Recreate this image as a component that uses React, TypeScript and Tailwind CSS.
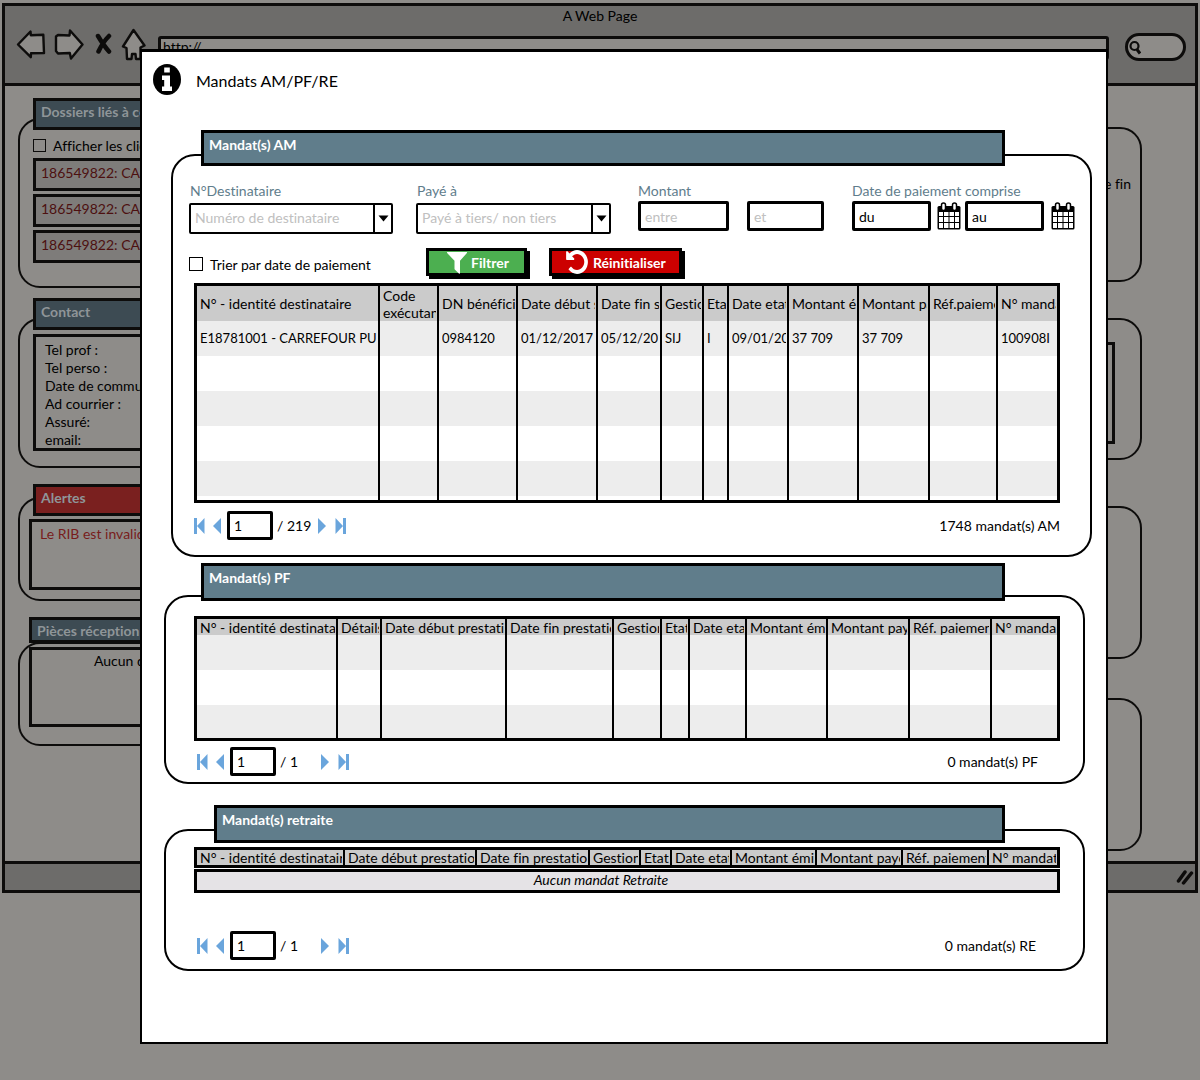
import type { ReactNode } from "react";

/* ---------- icons ---------- */

function BackIcon() {
  return (
    <svg className="h-[30px] w-[30px]" viewBox="0 0 30 30" fill="#8e8c89" stroke="#0d0c0b" strokeWidth="2.4" strokeLinejoin="round">
      <path d="M2 15.500L14.500 2.500 14.800 6.200 27.300 5.800 28 24 15 24.200 14.800 28.200Z" />
    </svg>
  );
}

function ForwardIcon() {
  return (
    <svg className="h-[32px] w-[30px]" viewBox="0 0 30 32" fill="#8e8c89" stroke="#0d0c0b" strokeWidth="2.400" strokeLinejoin="round">
      <path d="M2 8.500L4 7 15.500 7.500 16 2.500 28.500 16.500 17 30.500 15.800 25 4 25.500 2 23Z" />
    </svg>
  );
}

function StopIcon() {
  return (
    <svg className="h-[24px] w-[17px]" viewBox="0 0 17 24" fill="none" stroke="#0d0c0b" strokeWidth="4.500" strokeLinecap="round">
      <path d="M3 4C6 9 10 15 14 19.500M14 4C9 9 6 14 3.500 19.500" />
    </svg>
  );
}

function HomeIcon() {
  return (
    <svg className="h-[33px] w-[25px]" viewBox="0 0 25 33" fill="#8e8c89" stroke="#0d0c0b" strokeWidth="2.400" strokeLinejoin="round">
      <path d="M12.500 2L23.500 17.500 19.500 19.500 19.500 31 15 31 14.500 26 11 26 10.500 31 6 31 5.500 20 2 18.500Z" />
    </svg>
  );
}

function InfoIcon() {
  return (
    <svg className="h-[31px] w-[28px] shrink-0" viewBox="0 0 28 31" aria-hidden="true">
      <ellipse cx="14" cy="15.500" rx="14" ry="15.500" fill="#000" />
      <path fill="#fff" d="M11.200 3.500h5.600v5h-5.600zM9 11.500h8v11h2v4.500H9v-4.500h2.200v-6.500H9z" />
    </svg>
  );
}

function CalendarIcon() {
  return (
    <svg className="h-[28px] w-[24px]" viewBox="0 0 24 28" aria-hidden="true">
      <rect x="0.500" y="4" width="23" height="23.500" rx="1.500" fill="#000" />
      <path
        fill="#fff"
        d="M2 10h4v4H2zM7 10h4.500v4H7zM12.500 10h4.500v4h-4.500zM18 10h4v4h-4zM2 15h4v5H2zM7 15h4.500v5H7zM12.500 15h4.500v5h-4.500zM18 15h4v5h-4zM2 21h4v5H2zM7 21h4.500v5H7zM12.500 21h4.500v5h-4.500zM18 21h4v5h-4z"
      />
      <rect x="4.500" y="1" width="4" height="7.500" rx="2" fill="#fff" stroke="#000" strokeWidth="1.500" />
      <rect x="15.500" y="1" width="4" height="7.500" rx="2" fill="#fff" stroke="#000" strokeWidth="1.500" />
    </svg>
  );
}

function FunnelIcon() {
  return (
    <svg className="h-[23px] w-[20px]" viewBox="0 0 20 23" fill="#fff" aria-hidden="true">
      <path d="M0.500 1h19c.6 0 .8.600.400 1L13 9.800V22c0 .6-.6.900-1.100.500L8 18.800c-.4-.3-.500-.6-.5-1V9.800L.1 2C-.2 1.600 0 1 .5 1z" />
    </svg>
  );
}

function UndoIcon() {
  return (
    <svg className="h-[24px] w-[22px]" viewBox="120 120 1550 1550" preserveAspectRatio="none" fill="#fff" aria-hidden="true">
      <path d="M1664 896q0 156-61 298t-164 245-245 164-298 61q-172 0-327-72.500t-264-204.500q-7-10-6.500-22.500t8.500-20.500l137-138q10-9 25-9 16 2 23 12 73 95 179 147t225 52q104 0 198.500-40.500t163.500-109.500 109.500-163.500 40.500-198.500-40.500-198.500-109.500-163.500-163.500-109.500-198.500-40.500q-98 0-188 35.500t-160 101.500l137 138q31 30 14 69-17 40-59 40h-448q-26 0-45-19t-19-45v-448q0-42 40-59 39-17 69 14l130 129q107-101 244.500-156.500t284.500-55.500q156 0 298 61t245 164 164 245 61 298z" />
    </svg>
  );
}

/* ---------- page behind the dialog ---------- */

function SideBox({ title, tab, box, children }: { title: string; tab: string; box: string; children: ReactNode }) {
  return (
    <section>
      <h2 className={`relative border-[3px] border-[#0d0c0b] pt-px pl-[5px] text-[14px] leading-[20px] font-bold text-[#8f9598] ${tab}`}>{title}</h2>
      <div className={`rounded-[22px] border-2 border-[#0d0c0b] ${box}`}>{children}</div>
    </section>
  );
}

function BackgroundPage() {
  return (
    <div className="mx-[2px] border-[3px] border-[#0d0c0b]">
      <header className="h-[80px] border-b-[3px] border-[#0d0c0b] bg-[#6d6c6a]">
        <p className="text-center leading-[20px]">A Web Page</p>
        <div className="flex h-[36px] items-center pr-[9px] pl-[11px]">
          <button aria-label="Précédent"><BackIcon /></button>
          <button aria-label="Suivant" className="ml-[8px]"><ForwardIcon /></button>
          <button aria-label="Arrêter" className="ml-[11px]"><StopIcon /></button>
          <button aria-label="Accueil" className="ml-[9px]"><HomeIcon /></button>
          <input
            aria-label="Adresse"
            defaultValue="http://"
            className="mt-[8px] ml-[12px] h-[24px] min-w-0 flex-1 rounded-[3px] border-[3px] border-[#0d0c0b] bg-[#8e8c89] pb-[4px] pl-[2px]"
          />
          <div className="mt-[6px] ml-[16px] flex h-[28px] w-[61px] items-center rounded-[14px] border-[3px] border-[#0d0c0b] bg-[#8e8c89] pl-[1px]">
            <svg className="h-[15px] w-[12px] shrink-0" viewBox="0 0 12 15" fill="none" stroke="#0d0c0b" strokeWidth="2.200" aria-hidden="true">
              <circle cx="5.500" cy="6" r="4" />
              <path d="M8 9.500l3 4" strokeWidth="3" />
            </svg>
            <input aria-label="Recherche" className="w-full min-w-0" />
          </div>
        </div>
      </header>
      <main className="flex h-[775px] justify-between pr-[53px] pl-[13px]">
        <div className="w-[280px] pt-[12px]">
          <SideBox title="Dossiers liés à ce client" tab="ml-[15px] h-[32px] bg-[#3d4b53]" box="-mt-[12px] h-[170px] pt-[15px] pl-[13px]">
            <label className="flex h-[20px] items-center gap-[7px]">
              <input type="checkbox" className="size-[13px] appearance-none border border-[#0d0c0b]" />
              Afficher les clients
            </label>
            <div className="mt-[3px] flex flex-col gap-[3px]">
              {[0, 1, 2].map((i) => (
                <p key={i} className="h-[33px] border-[3px] border-[#0d0c0b] bg-[#7e7c7a] pl-[5px] leading-[23px] text-[#4d1010]">186549822: CARREFOUR</p>
              ))}
            </div>
          </SideBox>
          <div className="h-[10px]" />
          <SideBox title="Contact" tab="ml-[15px] h-[32px] bg-[#3d4b53]" box="-mt-[12px] h-[150px] pt-[14px] pl-[13px]">
            <div className="h-[117px] border-[3px] border-[#0d0c0b] pt-[4px] pl-[9px] leading-[18px]">
              <p>Tel prof :</p>
              <p>Tel perso :</p>
              <p>Date de communication :</p>
              <p>Ad courrier :</p>
              <p>Assuré:</p>
              <p>email:</p>
            </div>
          </SideBox>
          <div className="h-[16px]" />
          <SideBox title="Alertes" tab="ml-[15px] h-[32px] bg-[#7a201f]" box="-mt-[19px] h-[104px] pt-[20px] pl-[9px]">
            <p className="h-[71px] border-[3px] border-[#0d0c0b] pt-[2px] pl-[8px] leading-[20px] text-[#781c1c]">Le RIB est invalide</p>
          </SideBox>
          <div className="h-[16px]" />
          <SideBox title="Pièces réceptionnées" tab="ml-[11px] h-[26px] bg-[#3d4b53]" box="-mt-[1px] h-[104px] pt-[3px] pl-[9px]">
            <p className="h-[80px] border-[3px] border-[#0d0c0b] pl-[62px] leading-[22px]">Aucun document</p>
          </SideBox>
        </div>
        <div className="w-[280px] pt-[41px]">
          <div className="h-[155px] rounded-[22px] border-2 border-[#0d0c0b] pt-[45px] pr-[9px] text-right leading-[20px]">Date de fin</div>
          <div className="mt-[36px] h-[142px] rounded-[22px] border-2 border-[#0d0c0b] pt-[22px] pr-[25px]">
            <div className="h-[102px] border-[3px] border-[#0d0c0b]" />
          </div>
          <div className="mt-[46px] h-[153px] rounded-[22px] border-2 border-[#0d0c0b]" />
          <div className="mt-[39px] h-[153px] rounded-[22px] border-2 border-[#0d0c0b]" />
        </div>
      </main>
      <footer className="flex h-[29px] items-center justify-end border-t-[3px] border-[#0d0c0b] bg-[#6d6c6a] pr-[1px]">
        <svg className="h-[16px] w-[18px]" viewBox="0 0 18 16" fill="none" stroke="#0d0c0b" strokeWidth="3.500" strokeLinecap="round" aria-hidden="true">
          <path d="M2.500 12L9 3M7.500 14L15.500 4" />
        </svg>
      </footer>
    </div>
  );
}

/* ---------- dialog ---------- */

type Column = [label: string, width: string, value?: string];

const AM_COLUMNS: Column[] = [
  ["N° - identité destinataire", "w-[183px]", "E18781001 - CARREFOUR PU"],
  ["Code exécutant", "w-[59px]", ""],
  ["DN bénéficiaire", "w-[79px]", "0984120"],
  ["Date début soins", "w-[80px]", "01/12/2017"],
  ["Date fin soins", "w-[64px]", "05/12/2017"],
  ["Gestion", "w-[42px]", "SIJ"],
  ["Etat", "w-[25px]", "I"],
  ["Date etat", "w-[60px]", "09/01/2018"],
  ["Montant émis", "w-[70px]", "37 709"],
  ["Montant payé", "w-[71px]", "37 709"],
  ["Réf.paiement", "w-[68px]", ""],
  ["N° mandat", "w-[59px]", "100908I"],
];

const PF_COLUMNS: Column[] = [
  ["N° - identité destinataire", "w-[141px]"],
  ["Détails", "w-[44px]"],
  ["Date début prestation", "w-[125px]"],
  ["Date fin prestation", "w-[107px]"],
  ["Gestion", "w-[48px]"],
  ["Etat", "w-[28px]"],
  ["Date etat", "w-[57px]"],
  ["Montant émis", "w-[81px]"],
  ["Montant payé", "w-[82px]"],
  ["Réf. paiement", "w-[82px]"],
  ["N° mandat", "w-[65px]"],
];

const RE_COLUMNS: Column[] = [
  ["N° - identité destinataire", "w-[148px]"],
  ["Date début prestation", "w-[132px]"],
  ["Date fin prestation", "w-[113px]"],
  ["Gestion", "w-[51px]"],
  ["Etat", "w-[31px]"],
  ["Date etat", "w-[60px]"],
  ["Montant émis", "w-[85px]"],
  ["Montant payé", "w-[86px]"],
  ["Réf. paiement", "w-[86px]"],
  ["N° mandat", "w-[68px]"],
];

function DataTable({ columns, headHeight, rows }: { columns: Column[]; headHeight: string; rows: string[] }) {
  return (
    <table className="w-full table-fixed border-separate border-spacing-0 border-[3px] border-black">
      <thead>
        <tr className="bg-[#cbcbcb]">
          {columns.map(([label, width]) => (
            <th key={label} className={`border-r-2 border-black p-0 text-left font-normal last:border-r-0 ${width} ${headHeight}`}>
              <div className={`mr-[1px] ml-[2px] overflow-hidden first:pl-px ${label === "Code exécutant" ? "leading-[17px]" : "leading-[15px] whitespace-nowrap"}`}>{label}</div>
            </th>
          ))}
        </tr>
      </thead>
      <tbody>
        {rows.map((row, i) => (
          <tr key={i} className={row}>
            {columns.map(([label, , value]) => (
              <td key={label} className="border-r-2 border-black p-0 text-[13px] last:border-r-0">
                {i === 0 && value ? <div className="mr-[1px] ml-[3px] overflow-hidden whitespace-nowrap">{value}</div> : null}
              </td>
            ))}
          </tr>
        ))}
      </tbody>
    </table>
  );
}

function Pager({ name, total, count, className }: { name: string; total: string; count: string; className: string }) {
  return (
    <div className={`flex h-[29px] items-center ${className}`}>
      <button aria-label="Première page">
        <svg className="h-[16px] w-[12px]" viewBox="0 0 12 16" fill="#6aa5dc"><path d="M0 0h3v16H0zM10.500 0v16L3 8z" /></svg>
      </button>
      <button aria-label="Page précédente" className="ml-[6px]">
        <svg className="h-[16px] w-[10px]" viewBox="0 0 10 16" fill="#6aa5dc"><path d="M9 0v16L1 8z" /></svg>
      </button>
      <input aria-label={`Page ${name}`} defaultValue="1" className="ml-[5px] h-[29px] w-[46px] rounded-[2px] border-[3px] border-black bg-white pl-[4px]" />
      <span className="ml-[4px] w-[40px] whitespace-nowrap">/ {total}</span>
      <button aria-label="Page suivante">
        <svg className="h-[16px] w-[10px]" viewBox="0 0 10 16" fill="#6aa5dc"><path d="M1 0v16l8-8z" /></svg>
      </button>
      <button aria-label="Dernière page" className="ml-[8px]">
        <svg className="h-[16px] w-[12px]" viewBox="0 0 12 16" fill="#6aa5dc"><path d="M8 0h3v16H8zM0.500 0v16L8 8z" /></svg>
      </button>
      <span className="ml-auto">{count}</span>
    </div>
  );
}

function Panel({ title, tab, box, children }: { title: string; tab: string; box: string; children: ReactNode }) {
  return (
    <section>
      <h2 className={`relative mr-[101px] border-[3px] border-black bg-[#607d8b] pt-[2px] pl-[5px] leading-[20px] font-bold text-white ${tab}`}>{title}</h2>
      <div className={`rounded-[24px] border-2 border-black ${box}`}>{children}</div>
    </section>
  );
}

function SelectField({ id, label, placeholder, className }: { id: string; label: string; placeholder: string; className: string }) {
  return (
    <div className={className}>
      <label htmlFor={id} className="block pl-[1px] leading-[20px] text-[#5f7d8c]">{label}</label>
      <div className="relative mt-[2px]">
        <select id={id} className="h-[31px] w-full appearance-none rounded-[2px] border-2 border-black bg-white pr-[20px] pb-[2px] pl-[4px] text-[#c0c0c0]">
          <option>{placeholder}</option>
        </select>
        <span className="pointer-events-none absolute inset-y-0 right-0 flex w-[20px] items-center border-l-2 border-black pl-[3px]">
          <svg className="h-[7px] w-[11px]" viewBox="0 0 11 7" aria-hidden="true"><path d="M0.500 0.500h10L5.500 6.500z" /></svg>
        </span>
      </div>
    </div>
  );
}

const FIELD = "h-[30px] rounded-[2px] border-[3px] border-black bg-white pl-[4px] placeholder:text-[#c0c0c0]";

function Filters() {
  return (
    <form>
      <div className="flex items-start pl-[16px]">
        <SelectField id="dest" label="N°Destinataire" placeholder="Numéro de destinataire" className="w-[204px]" />
        <SelectField id="paye" label="Payé à" placeholder="Payé à tiers/ non tiers" className="ml-[23px] w-[195px]" />
        <div className="ml-[27px]">
          <label htmlFor="min" className="block leading-[20px] text-[#5f7d8c]">Montant</label>
          <div className="flex gap-[18px]">
            <input id="min" placeholder="entre" className={`w-[91px] ${FIELD}`} />
            <input aria-label="Montant maximum" placeholder="et" className={`w-[77px] ${FIELD}`} />
          </div>
        </div>
        <div className="ml-[28px]">
          <label htmlFor="du" className="block leading-[20px] whitespace-nowrap text-[#5f7d8c]">Date de paiement comprise</label>
          <div className="flex items-center">
            <input id="du" defaultValue="du" className={`w-[79px] ${FIELD}`} />
            <button type="button" aria-label="Choisir la date de début" className="ml-[6px]"><CalendarIcon /></button>
            <input aria-label="Date de fin" defaultValue="au" className={`ml-[4px] w-[79px] ${FIELD}`} />
            <button type="button" aria-label="Choisir la date de fin" className="ml-[7px]"><CalendarIcon /></button>
          </div>
        </div>
      </div>
      <div className="mt-[14px] flex h-[29px] items-start pl-[16px]">
        <label className="flex h-[32px] w-[237px] items-center gap-[7px]">
          <input type="checkbox" className="size-[14px] appearance-none border border-black" />
          Trier par date de paiement
        </label>
        <button type="button" className="flex h-[28px] w-[101px] items-center gap-[4px] border-[3px] border-black bg-[#4caf50] pl-[18px] font-bold text-white shadow-[3px_3px_0_#000]">
          <FunnelIcon />
          Filtrer
        </button>
        <button type="button" className="ml-[22px] flex h-[28px] w-[133px] items-center gap-[5px] border-[3px] border-black bg-[#cc0000] pl-[14px] font-bold text-white shadow-[3px_3px_0_#000]">
          <UndoIcon />
          Réinitialiser
        </button>
      </div>
    </form>
  );
}

export default function App() {
  return (
    <div className="relative min-h-screen bg-[#8e8c89] pt-[3px] font-['Lato',sans-serif] text-[14px] text-black [font-variant-ligatures:none]">
      <BackgroundPage />
      <div role="dialog" aria-labelledby="title" className="absolute top-[49px] right-[92px] left-[140px] border-2 border-t-[3px] border-black bg-white pb-[71px]">
        <header className="flex h-[78px] items-start gap-[15px] pt-[12px] pl-[11px]">
          <InfoIcon />
          <h1 id="title" className="pt-[5px] text-[16px] leading-[24px]">Mandats AM/PF/RE</h1>
        </header>
        <Panel title="Mandat(s) AM" tab="ml-[59px] h-[36px]" box="-mt-[12px] mr-[14px] ml-[29px] pt-[25px] pb-[15px]">
          <Filters />
          <div className="mt-[6px] mr-[30px] ml-[21px]">
            <DataTable
              columns={AM_COLUMNS}
              headHeight="h-[35px]"
              rows={["h-[35px] bg-[#ededed]", "h-[35px]", "h-[35px] bg-[#ededed]", "h-[35px]", "h-[35px] bg-[#ededed]", "h-[4px]"]}
            />
            <Pager name="AM" total="219" count="1748 mandat(s) AM" className="mt-[8px]" />
          </div>
        </Panel>
        <div className="h-[6px]" />
        <Panel title="Mandat(s) PF" tab="ml-[59px] h-[38px]" box="-mt-[6px] mr-[21px] ml-[22px] pt-[19px] pb-[6px]">
          <div className="mr-[23px] ml-[28px]">
            <DataTable columns={PF_COLUMNS} headHeight="h-[16px]" rows={["h-[35px] bg-[#ededed]", "h-[35px]", "h-[33px] bg-[#ededed]"]} />
            <Pager name="PF" total="1" count="0 mandat(s) PF" className="mt-[6px] mr-[22px] ml-[3px]" />
          </div>
        </Panel>
        <div className="h-[21px]" />
        <Panel title="Mandat(s) retraite" tab="ml-[72px] h-[38px]" box="-mt-[14px] mr-[21px] ml-[22px] pt-[16px] pb-[9px]">
          <div className="mr-[23px] ml-[28px]">
            <DataTable columns={RE_COLUMNS} headHeight="h-[15px]" rows={[]} />
            <p className="mt-px h-[24px] border-[3px] border-black bg-[#e5e3e6] pr-[52px] text-center leading-[16px] italic">Aucun mandat Retraite</p>
            <Pager name="RE" total="1" count="0 mandat(s) RE" className="mt-[38px] mr-[24px] ml-[3px]" />
          </div>
        </Panel>
      </div>
    </div>
  );
}
